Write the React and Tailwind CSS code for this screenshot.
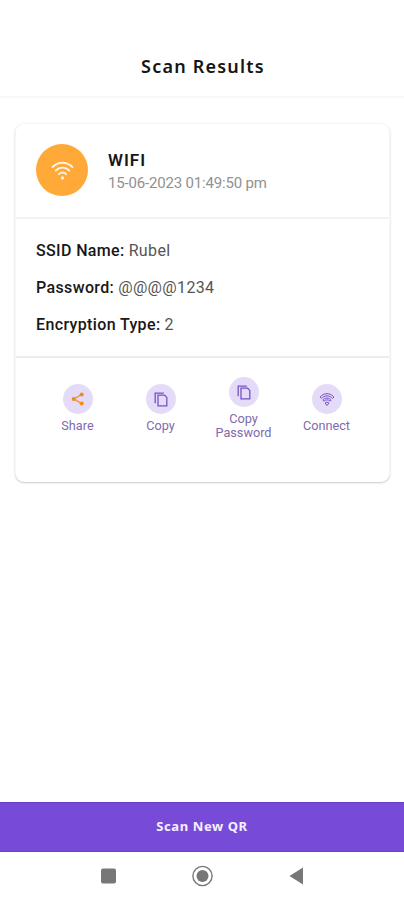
import React from 'react';

const WifiIcon = ({ className }) => (
  <svg viewBox="0 0 24 20" fill="none" stroke="currentColor" strokeLinecap="round" className={className}>
    <path d="M1.6 6.3c5.8-6 15-6 20.8 0" />
    <path d="M4.9 10.1c4-4.1 10.2-4.1 14.2 0" />
    <path d="M8.2 13.7c2.2-2.2 5.4-2.2 7.6 0" />
    <circle cx="12" cy="17.9" r="1.8" fill="currentColor" stroke="none" />
  </svg>
);

// outlined variant used on the small action button
const WifiFanIcon = () => (
  <svg viewBox="0 0 16 15" className="h-[15px] w-4 text-[#7752c4]" fill="none" stroke="currentColor" strokeWidth="1">
    <path d="M1 5.1C5 .5 11 .5 15 5.1l-1.3 1.3C10.400 3 5.600 3 2.300 6.400z" strokeLinejoin="round" />
    <path d="M3.800 8c2.400-2.600 6-2.600 8.400 0l-1.200 1.200c-1.700-1.800-4.300-1.800-6 0z" strokeLinejoin="round" />
    <path d="M6.100 11c1.200-1 2.600-1 3.800 0L8 13.500z" strokeLinejoin="round" />
  </svg>
);

const ShareIcon = () => (
  <svg viewBox="0 0 14 14" className="h-[14px] w-[14px] text-[#f28a1c]" fill="currentColor">
    <path d="M10.6 2.5 2.8 7l7.8 4.5" fill="none" stroke="currentColor" strokeWidth="1.2" />
    <circle cx="10.7" cy="2.5" r="2" />
    <circle cx="2.7" cy="7" r="2" />
    <circle cx="10.7" cy="11.5" r="2" />
  </svg>
);

const CopyIcon = () => (
  <svg viewBox="0 0 14 15" className="h-[15px] w-[14px] text-[#7752c4]" fill="none" stroke="currentColor" strokeWidth="1.3">
    <path d="M1.2 11.2V1.2h8.6" />
    <path d="M4 3.2h6.6l2.2 2.2v8.400H4z" />
  </svg>
);

const actions = [
  { id: 'share', label: 'Share', icon: <ShareIcon /> },
  { id: 'copy', label: 'Copy', icon: <CopyIcon /> },
  { id: 'copy-password', label: 'Copy Password', icon: <CopyIcon /> },
  { id: 'connect', label: 'Connect', icon: <WifiFanIcon /> }
];

const details = [
  { label: 'SSID Name:', value: 'Rubel' },
  { label: 'Password:', value: '@@@@1234' },
  { label: 'Encryption Type:', value: '2' }
];

const App = () => {
  return (
    <div className="flex h-[900px] w-[404px] flex-col overflow-hidden bg-white font-['Roboto',sans-serif]">
      {/* Header */}
      <header className="flex h-[98px] shrink-0 justify-center border-b-2 border-[#f7f7f7] pt-[53px] pl-0.5">
        <h1 className="font-['Noto_Sans',sans-serif] text-[18px] leading-[26px] font-semibold tracking-[1.2px] text-[#151515]">
          Scan Results
        </h1>
      </header>

      {/* Result card */}
      <main className="flex-1 pt-[25px] pr-[14px] pl-[15px]">
        <section className="h-[359px] rounded-[9px] border-x border-t border-[#f6f6f6] bg-white shadow-[0_1px_2px_rgba(0,0,0,0.22)]">
          <div className="flex h-[95px] items-start border-b-2 border-[#f3f3f3] pt-5 pl-5">
            <div className="flex h-[52px] w-[52px] items-center justify-center rounded-full bg-[#ffa938]">
              <WifiIcon className="h-[19px] w-[23px] stroke-[2] text-[#fff3df]" />
            </div>
            <div className="ml-5 pt-[5px]">
              <h2 className="text-[17px] leading-[22px] font-semibold tracking-[1px] text-[#171717]">WIFI</h2>
              <p className="mt-px text-[15px] leading-[22px] tracking-[-0.18px] text-[#919191]">15-06-2023 01:49:50 pm</p>
            </div>
          </div>

          <dl className="flex h-[139px] flex-col border-b-2 border-[#ececec] pt-[13px] pl-5">
            {details.map((item) => (
              <div key={item.label} className="flex h-[37px] items-center gap-1 text-[16px] tracking-[0.36px]">
                <dt className="font-medium text-[#171717]">{item.label}</dt>
                <dd className="text-[#555]">{item.value}</dd>
              </div>
            ))}
          </dl>

          <div className="ml-5 grid h-[101px] w-[332px] grid-cols-4 items-center">
            {actions.map((action) => (
              <button key={action.id} className="flex flex-col items-center">
                <span className="flex h-[30px] w-[30px] items-center justify-center rounded-full bg-[#e4dbf8]">
                  {action.icon}
                </span>
                <span className="mt-[5px] w-[60px] text-center text-[12.7px] leading-[14px] text-[#806aae]">
                  {action.label}
                </span>
              </button>
            ))}
          </div>
        </section>
      </main>

      <button className="h-[50px] w-full shrink-0 border-y border-[#6a40c5] bg-[#774bd8] font-['Noto_Sans',sans-serif] text-[13px] font-bold tracking-[0.6px] text-[#f7efff]">
        Scan New QR
      </button>

      {/* System navigation */}
      <nav className="flex h-12 shrink-0 items-center justify-center text-[#777]">
        <svg viewBox="0 0 220 24" className="h-6 w-[220px]" fill="currentColor">
          <rect x="9" y="4.5" width="15" height="15" rx="2" />
          <circle cx="110.5" cy="12" r="9.6" fill="none" stroke="currentColor" strokeWidth="1.4" />
          <circle cx="110.5" cy="12" r="6" />
          <path d="M197.5 12 211 3.5v17z" />
        </svg>
      </nav>
    </div>
  );
};

export default App;
